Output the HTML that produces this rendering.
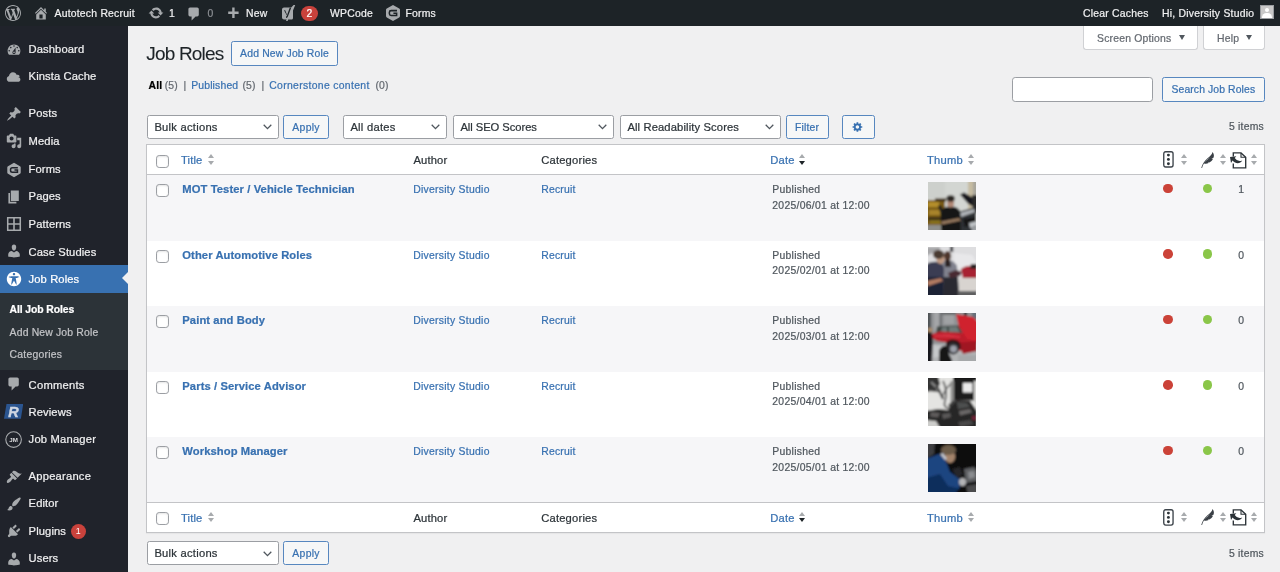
<!DOCTYPE html>
<html lang="en">
<head>
<meta charset="utf-8">
<title>Job Roles</title>
<style>
*{box-sizing:border-box;margin:0;padding:0}
html,body{width:1280px;height:572px;overflow:hidden}
body{background:#f0f0f1;font-family:"Liberation Sans",sans-serif;font-size:10.4px;color:#3c434a;position:relative;-webkit-text-stroke:.22px currentColor}
a{text-decoration:none;color:#3871b1}
#root{position:absolute;left:0;top:0;width:1280px;height:572px;overflow:hidden;will-change:transform}
.abs{position:absolute}
svg{display:block}

/* ---------- admin bar ---------- */
#bar{position:absolute;left:0;top:0;width:1280px;height:26px;background:#1d2327;color:#f0f0f1;font-size:10.4px}
#bar .t{position:absolute;top:0;height:26px;line-height:27.2px;letter-spacing:.22px;white-space:nowrap;color:#f0f0f1}
#bar .ic{position:absolute;fill:#a7aaad}
#bar .badge{position:absolute;left:301px;top:6px;width:17px;height:14.5px;border-radius:8px;background:#c9423c;color:#fff;font-size:10.4px;line-height:15.6px;text-align:center}

/* ---------- side menu ---------- */
#menu{position:absolute;left:0;top:26px;width:128px;height:546px;background:#20232b}
#menu .it{position:absolute;left:0;width:128px;height:27.2px;color:#f0f0f1;font-size:11.2px;line-height:27.2px}
#menu .it span.l{position:absolute;left:28.6px;top:0;white-space:nowrap;letter-spacing:.1px}
#menu .it svg{position:absolute;left:6px;top:5.6px;width:16px;height:16px;fill:#a7aaad}
#menu .cur{background:#3871b1;color:#fff}
#menu .cur svg{fill:#fff}
#menu .cur:after{content:"";position:absolute;right:0;top:7.2px;border:6.4px solid transparent;border-right-color:#f0f0f1;border-left-width:0}
#sub{position:absolute;left:0;width:128px;background:#2c3338}
#sub div{position:absolute;left:9.6px;font-size:10.4px;color:#c3c4c7;white-space:nowrap;line-height:14px}
#sub div.on{color:#fff;font-weight:700}
.pbadge{position:absolute;width:14.6px;height:14.6px;border-radius:8px;background:#c9423c;color:#fff;font-size:8.8px;line-height:15px;text-align:center;-webkit-text-stroke:0}

/* ---------- content ---------- */
h1{position:absolute;left:146.3px;top:41.6px;letter-spacing:-.82px;font-size:19px;-webkit-text-stroke:.08px currentColor;font-weight:400;color:#1d2327;line-height:24px;white-space:nowrap}
.btn{position:absolute;letter-spacing:.17px;border:1px solid #5787bf;border-radius:2.4px;background:#f6f7f7;color:#3871b1;font-size:10.4px;text-align:center;white-space:nowrap}
.sel{position:absolute;letter-spacing:.25px;height:24px;border:1px solid #9b9ea3;border-radius:2.4px;background:#fff;color:#2c3338;font-size:11.2px;line-height:22px;padding-left:6.4px;white-space:nowrap}
.sel svg{position:absolute;right:5.6px;top:8.5px}
.meta{position:absolute;top:26px;height:23.5px;letter-spacing:.2px;padding-top:1.6px;border:1px solid #d0d1d4;border-top:none;border-radius:0 0 3.2px 3.2px;background:#fff;color:#646970;font-size:10.4px;line-height:22px;white-space:nowrap}
.meta i{position:absolute;top:9.1px;width:0;height:0;border:3.3px solid transparent;border-top:5px solid #50575e;border-bottom:none}
.subsub{position:absolute;letter-spacing:.16px;font-size:10.4px;line-height:14px;color:#646970;white-space:nowrap}
.subsub b{color:#000;font-weight:700}
.count{position:absolute;letter-spacing:.2px;font-size:10.4px;color:#50575e;white-space:nowrap;line-height:14px}

/* ---------- table ---------- */
#tbl{position:absolute;left:146px;top:144px;width:1119px;height:389px;background:#fff;border:1px solid #c3c4c7;box-shadow:0 1px 1px rgba(0,0,0,.04)}
.hrow{position:absolute;left:0;width:1117px;height:30px;background:#fff}
.row{position:absolute;left:0;width:1117px;height:65.5px}
.odd{background:#f6f6f8}
.cb{position:absolute;left:8.75px;width:13px;height:13px;border:1px solid #9b9ea3;border-radius:3.2px;background:#fff;box-shadow:inset 0 1px 2px rgba(0,0,0,.1)}
.th{position:absolute;letter-spacing:.15px;font-size:11.2px;line-height:16px;white-space:nowrap;color:#2c3338}
.th.lnk{color:#3871b1}
.td{position:absolute;letter-spacing:.27px;font-size:10.4px;line-height:15.6px;white-space:nowrap;color:#50575e}
.td.lnk{color:#3871b1}
.ttl{position:absolute;left:35.3px;letter-spacing:.1px;font-size:11.2px;font-weight:700;color:#3871b1;white-space:nowrap;line-height:16px}
.srt{position:absolute;width:6.4px;height:11px}
.srt:before,.srt:after{content:"";position:absolute;left:0;width:0;height:0;border-left:3.2px solid transparent;border-right:3.2px solid transparent}
.srt:before{top:0;border-bottom:4.3px solid #a7aaad}
.srt:after{top:6.7px;border-top:4.3px solid #a7aaad}
.srt.d:after{border-top-color:#1d2327}
.dot{position:absolute;width:9.6px;height:9.6px;border-radius:50%}
.red{background:#cb4238}
.grn{background:#8ac649}
.thumb{position:absolute;left:781px;width:48px;height:48px;overflow:hidden}
</style>
</head>
<body>
<div id="root">
<svg width="0" height="0" style="position:absolute">
  <defs>
    <filter id="bl" x="-5%" y="-5%" width="110%" height="110%"><feGaussianBlur stdDeviation="0.9"/></filter>
    <clipPath id="cp"><rect width="48" height="48"/></clipPath>
    <!-- thumb 1 : MOT tester -->
    <g id="t1" clip-path="url(#cp)"><g filter="url(#bl)">
      <rect x="-3" y="-3" width="54" height="54" fill="#d3d6d2"/>
      <rect x="-3" y="-3" width="20" height="20" fill="#cdd0cc"/>
      <rect x="40" y="-2" width="5" height="34" fill="#c6bca2"/>
      <rect x="45" y="-2" width="5" height="16" fill="#a8a69c"/>
      <rect x="-2" y="18" width="19" height="25" fill="#7a5c18"/>
      <rect x="7" y="16.500" width="11" height="3" fill="#3c2c10"/>
      <rect x="0" y="20" width="11" height="5" fill="#b48e2c"/>
      <rect x="1" y="28" width="12" height="5" fill="#a8842a"/>
      <rect x="0" y="35" width="14" height="3.500" fill="#3e3212"/>
      <rect x="2" y="38.500" width="10" height="3" fill="#8a7424"/>
      <rect x="-2" y="43" width="16" height="8" fill="#8e8e8a"/>
      <path d="M32 12.500l4-2 12 7v9l-8-5z" fill="#18181a"/>
      <path d="M44 13h6v18h-5z" fill="#2a2a2c"/>
      <path d="M30 30l18-5v25H32z" fill="#2e3034"/>
      <path d="M31 31l15-4 1 3-14 5z" fill="#b0b4b8"/>
      <path d="M35 37l13-2v7l-11 3z" fill="#121216"/>
      <path d="M41 41l8-2v4l-7 3z" fill="#c0c4c8"/>
      <path d="M43 45l6-1v6h-5z" fill="#9a9ea2"/>
      <path d="M12.500 32c0-5 4-7.500 10-7.500s10 2.500 10 7.500v18H13.500z" fill="#131313"/>
      <path d="M10 24l3 9 3-2-3-8z" fill="#1a1a1a"/>
      <ellipse cx="22.600" cy="21" rx="3.500" ry="4.600" fill="#b08876"/>
      <ellipse cx="22.600" cy="16.500" rx="4.200" ry="3.200" fill="#2c2622"/>
      <path d="M13 39.500l18-3.500 2 2.500-19 4z" fill="#96785e"/>
    </g></g>
    <!-- thumb 2 : two men -->
    <g id="t2" clip-path="url(#cp)"><g filter="url(#bl)">
      <rect x="-3" y="-3" width="54" height="54" fill="#dedee0"/>
      <path d="M-2 0h14v3l-14 6z" fill="#a8a8aa"/>
      <rect x="22" y="-1" width="3.200" height="6" fill="#38383c"/>
      <path d="M26 6l18 2 5 8v6H26z" fill="#e8e8ea"/>
      <path d="M14 17c0-3 3-4 6-4s7 2 9 6l2 31H15z" fill="#80828e"/>
      <path d="M15 30h15l1 20H15z" fill="#2c2c32"/>
      <ellipse cx="19.500" cy="9" rx="3.600" ry="5" fill="#4e342a"/>
      <path d="M17 13h5l1 7h-6z" fill="#2a2020"/>
      <path d="M-2 18c2-3 8-4 12-3s6 4 6 8l-1 27H-2z" fill="#3a3e52"/>
      <path d="M-2 30h17v20H-2z" fill="#1c2036"/>
      <ellipse cx="12.500" cy="12" rx="4" ry="5" fill="#c09a82"/>
      <ellipse cx="10.500" cy="7.500" rx="5.500" ry="4.500" fill="#4a3a30"/>
      <path d="M-1 34l14-3 2 3-15 5z" fill="#b47c62"/>
      <path d="M20 26l8-3 6 2-2 4-10 2z" fill="#4a2a30"/>
      <path d="M33 22c3-3 9-4 16-3v12l-14 1z" fill="#a82030"/>
      <path d="M43 17h6v5h-7z" fill="#2a2024"/>
      <rect x="31" y="31" width="18" height="13" fill="#d8d4d0"/>
      <rect x="30" y="44" width="19" height="6" fill="#5e5e60"/>
    </g></g>
    <!-- thumb 3 : red car -->
    <g id="t3" clip-path="url(#cp)"><g filter="url(#bl)">
      <rect x="-3" y="-3" width="54" height="54" fill="#909294"/>
      <rect x="-3" y="-3" width="6" height="22" fill="#505256"/>
      <rect x="6" y="-2" width="5" height="20" fill="#a4a6a8"/>
      <rect x="12" y="-2" width="1.500" height="18" fill="#5c5e62"/>
      <rect x="16" y="2" width="10" height="9" fill="#a0a2a4"/>
      <rect x="14" y="-2" width="14" height="4" fill="#6c6e70"/>
      <rect x="36" y="-2" width="3" height="5" fill="#2e2e32"/>
      <rect x="44" y="-2" width="6" height="8" fill="#66707a"/>
      <rect x="-3" y="31" width="54" height="20" fill="#b2b4b6"/>
      <path d="M4 32l14 2 4 8-18 3z" fill="#c6c8ca"/>
      <path d="M9 13.500l22-1 4 8H8z" fill="#3c4442"/>
      <path d="M21 14l8-.5 3 6h-11z" fill="#6e7a78"/>
      <path d="M14 14.500l5-.3v5.300h-6z" fill="#707c7a"/>
      <path d="M4 21l8-2.500 26 1.500 11 3v12l-8 4-12-2-6-7-14-2-5-3z" fill="#bc1c2a"/>
      <path d="M6 22l14-1 12 2v2l-26-1z" fill="#d43040"/>
      <path d="M28 1l17 3 5 5v20l-11-3-8-12z" fill="#d0202e"/>
      <path d="M30 30l19-2v10l-14 3z" fill="#a01624"/>
      <path d="M18 30c2-4 10-5 14 0l1 6H18z" fill="#2a1418"/>
      <circle cx="25" cy="35.500" r="6" fill="#303036"/>
      <circle cx="25.500" cy="36" r="3.400" fill="#9ca0aa"/>
      <path d="M-2 18h5.500l1.500 10-1 22H-2z" fill="#18181c"/>
      <ellipse cx="2" cy="17" rx="2.500" ry="2.500" fill="#a88868"/>
      <path d="M11 38c1-4 5-6 8-5l2 8 3 6v3H11z" fill="#161618"/>
      <rect x="30" y="42" width="20" height="8" fill="#a6a8aa"/>
    </g></g>
    <!-- thumb 4 : engine bw -->
    <g id="t4" clip-path="url(#cp)"><g filter="url(#bl)">
      <rect x="-3" y="-3" width="54" height="54" fill="#e4e4e2"/>
      <path d="M-2-2h12l2 8-4 6-10 2z" fill="#303030"/>
      <path d="M0 12l13 1.500" stroke="#4a4a4a" stroke-width="2" fill="none"/>
      <path d="M3 4l5 5" stroke="#8a8a8a" stroke-width="2" fill="none"/>
      <path d="M15 3c3 6 4 14 2 20s2 8 6 7" stroke="#5a5a5a" stroke-width="1.800" fill="none"/>
      <path d="M24 5c-4 3-8 8-10 15" stroke="#6a6a6a" stroke-width="1.600" fill="none"/>
      <path d="M9 8l6 13" stroke="#444" stroke-width="2.200" fill="none"/>
      <rect x="22.500" y="3" width="3.500" height="26" fill="#8e8e8c"/>
      <rect x="25" y="-2" width="24" height="5" fill="#141414"/>
      <rect x="26" y="1" width="20" height="21.500" fill="#1a1a1a"/>
      <rect x="35" y="5" width="9.500" height="9.500" fill="#eaeaea"/>
      <rect x="46" y="3" width="3" height="22" fill="#d8d8d6"/>
      <path d="M-2 33l12-2 10 1 8-10 14 1 7 10v18H8l-10-6z" fill="#282626"/>
      <path d="M29 24l10 1 3 4-12 2z" fill="#4e5050"/>
      <path d="M31 33l11-2 2 3.500-12 3z" fill="#6a6868"/>
      <path d="M14 36l8-1 1 4-8 2z" fill="#5a5858"/>
      <path d="M3 34l9 1-2 4.500-8-1z" fill="#5e5c5c"/>
      <rect x="44" y="38" width="5" height="4" fill="#702234"/>
      <path d="M-2 42l10 1 4 7H-2z" fill="#cdcdcb"/>
      <path d="M30 44l12-2 4 4-14 3z" fill="#4a4848"/>
      <path d="M20 27l6-5 2 2-6 6z" fill="#3a3a3a"/>
    </g></g>
    <!-- thumb 5 : mechanic in blue -->
    <g id="t5" clip-path="url(#cp)"><g filter="url(#bl)">
      <rect x="-3" y="-3" width="54" height="54" fill="#0b0b0d"/>
      <path d="M-2-2h9l-1 12-8 5z" fill="#3c3e40"/>
      <ellipse cx="22" cy="12.500" rx="5.200" ry="6.500" fill="#a4846c"/>
      <ellipse cx="20.500" cy="6" rx="7.500" ry="5" fill="#6c5c4a"/>
      <path d="M-2 15l13-5 6 5 5 13 11 8-2 9-12 4H-2z" fill="#1d4580"/>
      <path d="M-2 34l14-4 8 12 10 2-2 6H-2z" fill="#0f2e5c"/>
      <path d="M12 10l3-1 4 6-2 1z" fill="#c8ccd4"/>
      <path d="M36 25l10-2 3 4v10l-11 2z" fill="#5e6064"/>
      <path d="M40 28l6-1 1 6-6 2z" fill="#8a8c90"/>
      <ellipse cx="34.500" cy="38" rx="3.500" ry="4" fill="#b4b4b6"/>
      <path d="M38 42l11-2v10H40z" fill="#4c4c4e"/>
      <path d="M24 25l8-2 3 8-6 3z" fill="#26282c"/>
    </g></g>
  </defs>
</svg>

<!-- ======= ADMIN BAR ======= -->
<div id="bar">
  <svg class="ic" style="left:4.5px;top:5px" width="16" height="16" viewBox="0 0 20 20"><path d="M20 10c0-5.51-4.49-10-10-10C4.48 0 0 4.49 0 10c0 5.52 4.48 10 10 10 5.51 0 10-4.48 10-10zM7.78 15.37L4.37 6.22c.55-.02 1.17-.08 1.17-.08.5-.06.44-1.13-.06-1.11 0 0-1.45.11-2.37.11-.18 0-.37 0-.58-.01C4.12 2.69 6.87 1.11 10 1.11c2.33 0 4.45.87 6.05 2.34-.68-.11-1.65.39-1.65 1.58 0 .74.45 1.36.9 2.1.35.61.55 1.36.55 2.46 0 1.49-1.4 5-1.4 5l-3.03-8.37c.54-.02.82-.17.82-.17.5-.05.44-1.25-.06-1.22 0 0-1.44.12-2.38.12-.87 0-2.33-.12-2.33-.12-.5-.03-.56 1.2-.06 1.22l.92.08 1.26 3.41zM17.41 10c.24-.64.74-1.87.43-4.25.7 1.29 1.05 2.71 1.05 4.25 0 3.29-1.73 6.24-4.4 7.78.97-2.59 1.94-5.2 2.92-7.78zM6.1 18.09C3.12 16.65 1.11 13.53 1.11 10c0-1.3.23-2.48.72-3.59C3.25 10.3 4.67 14.2 6.1 18.09zm4.03-6.63l2.58 6.98c-.86.29-1.76.45-2.71.45-.79 0-1.57-.11-2.29-.33.81-2.38 1.62-4.74 2.42-7.1z"/></svg>
  <svg class="ic" style="left:32.7px;top:4.8px" width="16" height="16" viewBox="0 0 20 20"><path d="M16 8.5l1.53 1.53-1.06 1.06L10 4.62l-6.47 6.47-1.06-1.06L10 2.5l4 4v-2h2v4zm-6-2.46l6 5.99V18H4v-5.97zM12 17v-5H8v5h4z"/></svg>
  <div class="t" style="left:54.5px">Autotech Recruit</div>
  <svg class="ic" style="left:148px;top:5px" width="16" height="16" viewBox="0 0 20 20"><path d="M10.2 3.28c3.53 0 6.43 2.61 6.92 6h2.08l-3.5 4-3.5-4h2.32c-.45-1.97-2.21-3.45-4.32-3.45-1.45 0-2.73.71-3.54 1.78L4.95 5.66C6.23 4.2 8.11 3.28 10.2 3.28zm-.4 13.44c-3.52 0-6.43-2.61-6.92-6H.8l3.5-4c1.17 1.33 2.33 2.67 3.5 4H5.48c.45 1.97 2.21 3.45 4.32 3.45 1.45 0 2.73-.71 3.54-1.78l1.71 1.95c-1.28 1.46-3.15 2.38-5.25 2.38z"/></svg>
  <div class="t" style="left:169px">1</div>
  <svg class="ic" style="left:186px;top:6px" width="16" height="16" viewBox="0 0 20 20"><path d="M5 2h9c1.1 0 2 .9 2 2v7c0 1.1-.9 2-2 2h-2l-5 5v-5H5c-1.1 0-2-.9-2-2V4c0-1.1.9-2 2-2z"/></svg>
  <div class="t" style="left:207.5px;color:#8c8f94">0</div>
  <svg class="ic" style="left:225px;top:6px" width="16" height="16" viewBox="0 0 20 20"><path d="M17 7v3h-5v5H9v-5H4V7h5V2h3v5h5z"/></svg>
  <div class="t" style="left:246px">New</div>
  <!-- yoast -->
  <svg class="ic" style="left:281px;top:4.5px" width="15" height="16" viewBox="0 0 15 16"><path d="M3 2.5h7.2L12.6 0h1.6L12 5.5V13c0 .8-.5 1.5-1.5 1.5H7.2L6.6 16H5l.6-1.5H3c-1 0-2-.7-2-2v-8c0-1.300 1-2 2-2z"/><path d="M4.2 5.200l1.900 4.800 2.600-7.200h1.500L7 11.300c-.4 1-.9 1.600-2 1.600v-1.300c.6 0 .8-.3 1-.8L3 5.200z" fill="#1d2327"/></svg>
  <div class="badge">2</div>
  <div class="t" style="left:330px">WPCode</div>
  <!-- gravity forms -->
  <svg class="ic" style="left:385.5px;top:5px" width="14" height="16" viewBox="0 0 14 16"><path d="M7 0l6.200 3.600c.5.300.8.800.8 1.400v6c0 .600-.3 1.100-.8 1.400L7 16 .8 12.400C.3 12.100 0 11.600 0 11V5c0-.6.3-1.100.8-1.400z"/><path d="M11 5.600H5.100c-1 0-1.700.700-1.700 1.700v1.400c0 1 .7 1.700 1.700 1.700h5.500V8.200H7.400" fill="none" stroke="#1d2327" stroke-width="1.550"/></svg>
  <div class="t" style="left:405.5px">Forms</div>

  <div class="t" style="left:1083px">Clear Caches</div>
  <div class="t" style="left:1162px">Hi, Diversity Studio</div>
  <div class="abs" style="left:1260.3px;top:5.3px;width:14px;height:14px;background:#c8c8c8;border:1px solid #9a9da1;overflow:hidden">
    <div class="abs" style="left:3.5px;top:1.5px;width:4.5px;height:4.5px;border-radius:50%;background:#fff"></div>
    <div class="abs" style="left:1px;top:6.5px;width:9.5px;height:8px;border-radius:4.5px 4.5px 0 0;background:#fff"></div>
  </div>
</div>

<!-- ======= SIDE MENU ======= -->
<div id="menu">
  <div class="it" style="top:10.1px"><svg viewBox="0 0 20 20"><path d="M3.76 16h12.48c1.1-1.37 1.76-3.11 1.76-5 0-4.42-3.58-8-8-8s-8 3.58-8 8c0 1.89.66 3.63 1.76 5zM10 4c.55 0 1 .45 1 1s-.45 1-1 1-1-.45-1-1 .45-1 1-1zM6 6c.55 0 1 .45 1 1s-.45 1-1 1-1-.45-1-1 .45-1 1-1zm8 0c.55 0 1 .45 1 1s-.45 1-1 1-1-.45-1-1 .45-1 1-1zm-5.37 5.55L12 7v6c0 1.1-.9 2-2 2s-2-.9-2-2c0-.57.24-1.08.63-1.45zM4 10c.55 0 1 .45 1 1s-.45 1-1 1-1-.45-1-1 .45-1 1-1zm12 0c.55 0 1 .45 1 1s-.45 1-1 1-1-.45-1-1 .45-1 1-1zm-5 3c0-.55-.45-1-1-1s-1 .45-1 1 .45 1 1 1 1-.45 1-1z"/></svg><span class="l">Dashboard</span></div>
  <div class="it" style="top:37.3px"><svg viewBox="0 0 20 20"><path d="M14.9 9c1.8 0 3.1 1.400 3.1 3.100S16.600 15 14.900 15H4.600C2.600 15 1 13.400 1 11.400c0-1.700 1.200-3.100 2.700-3.500C3.800 5.200 6 3 8.700 3c2.300 0 4.200 1.500 4.800 3.600.4-.2.900-.4 1.400-.4 1.100 0 2 .9 2 2 0 .3-.1.600-.2.800z" transform="translate(0 1)"/></svg><span class="l">Kinsta Cache</span></div>

  <div class="it" style="top:74.0px"><svg viewBox="0 0 20 20"><path d="M10.44 3.02l1.82-1.82 6.36 6.35-1.83 1.82c-1.05-.68-2.48-.57-3.41.36l-.75.75c-.92.93-1.04 2.35-.35 3.41l-1.83 1.82-2.41-2.41-2.8 2.79c-.42.42-3.38 2.71-3.8 2.29s1.86-3.39 2.28-3.81l2.79-2.79L4.1 9.36l1.830-1.820c1.050.690 2.480.570 3.400-.360l.750-.750c.930-.920 1.050-2.350.360-3.410z"/></svg><span class="l">Posts</span></div>
  <div class="it" style="top:101.9px"><svg viewBox="0 0 20 20"><path d="M13 11V4c0-.55-.45-1-1-1h-1.670L9 1H5L3.670 3H2c-.55 0-1 .45-1 1v7c0 .55.45 1 1 1h10c.55 0 1-.45 1-1zM7 4.500c1.380 0 2.500 1.120 2.500 2.500S8.380 9.500 7 9.500 4.500 8.380 4.500 7 5.620 4.500 7 4.500zM14 6h5v10.500c0 1.380-1.120 2.500-2.500 2.500S14 17.880 14 16.500s1.120-2.500 2.500-2.500c.170 0 .340.020.5.050V9h-3V6zm-4 8.050V13h2v3.500c0 1.380-1.120 2.500-2.500 2.500S7 17.880 7 16.500 8.120 14 9.500 14c.170 0 .340.020.5.050z"/></svg><span class="l">Media</span></div>
  <div class="it" style="top:129.6px"><svg viewBox="0 0 20 20" style="top:6.2px"><path d="M10 1l7.500 4.300c.6.300.9.900.9 1.500v6.400c0 .600-.3 1.200-.9 1.500L10 19l-7.500-4.300c-.6-.300-.9-.900-.9-1.500V6.800c0-.600.3-1.200.9-1.500z"/><path d="M14.800 7.200H7.900c-1.300 0-2.200.900-2.200 2.200v1.200c0 1.300.9 2.200 2.200 2.200h6.400v-2.700h-3.700" fill="none" stroke="#20232b" stroke-width="1.900"/></svg><span class="l">Forms</span></div>
  <div class="it" style="top:157.1px"><svg viewBox="0 0 20 20"><path d="M6 15V2h10v13H6zm-1 1h8v2H3V5h2v11z"/></svg><span class="l">Pages</span></div>
  <div class="it" style="top:184.9px"><svg viewBox="0 0 20 20"><path d="M1.200 1.200h17.600v17.600H1.200zM3.100 3.100v5.900h5.900V3.100zm7.900 0v5.900h5.900V3.100zM3.100 11v5.900h5.900V11zm7.900 0v5.900h5.900V11z" fill-rule="evenodd"/></svg><span class="l">Patterns</span></div>
  <div class="it" style="top:212.5px"><svg viewBox="0 0 20 20" style="top:4.9px"><path d="M10 9.250c-2.270 0-2.730-3.440-2.730-3.440C7 4.020 7.820 2 9.970 2c2.160 0 2.980 2.020 2.710 3.810 0 0-.41 3.440-2.680 3.440zm0 2.570L12.720 10c2.390 0 4.520 2.330 4.520 4.530v2.490s-3.650 1.130-7.240 1.130c-3.650 0-7.240-1.130-7.240-1.130v-2.490c0-2.250 1.940-4.480 4.470-4.480z"/></svg><span class="l">Case Studies</span></div>
  <div class="it cur" style="top:239.3px;height:27.6px"><svg viewBox="0 0 20 20"><path d="M19 10c0-4.970-4.030-9-9-9s-9 4.030-9 9 4.030 9 9 9 9-4.030 9-9zm-9-7.400c.83 0 1.500.67 1.500 1.500s-.67 1.510-1.500 1.510c-.82 0-1.500-.68-1.500-1.510s.68-1.500 1.500-1.500zM3.400 7.360c0-.65 6.600-.76 6.600-.76s6.600.11 6.600.76-4.470 1.400-4.470 1.400 1.690 8.140 1.060 8.380c-.62.240-3.190-5.190-3.190-5.190s-2.560 5.430-3.180 5.190c-.63-.24 1.060-8.380 1.060-8.380S3.400 8.010 3.400 7.360z"/></svg><span class="l" style="top:.8px">Job Roles</span></div>

  <div id="sub" style="top:266.9px;height:77.6px">
    <div class="on" style="top:9.8px;letter-spacing:-.1px">All Job Roles</div>
    <div style="top:32.8px;letter-spacing:.17px">Add New Job Role</div>
    <div style="top:55.3px;letter-spacing:.23px">Categories</div>
  </div>

  <div class="it" style="top:345.5px"><svg viewBox="0 0 20 20" style="top:4.7px"><path d="M5 2h9c1.1 0 2 .9 2 2v7c0 1.1-.9 2-2 2h-2l-5 5v-5H5c-1.1 0-2-.9-2-2V4c0-1.1.9-2 2-2z"/></svg><span class="l" style="letter-spacing:.25px">Comments</span></div>
  <div class="it" style="top:372.5px">
    <svg style="left:4.2px;top:5.3px;width:19.2px;height:14.8px" viewBox="0 0 19.2 14.8"><path d="M2.500 0H19.200L16.900 14.800H0z" fill="#2b5590"/><text x="4.300" y="12.600" font-family="Liberation Sans" font-size="14.500" font-weight="700" font-style="italic" fill="#cfd6e2" stroke="#cfd6e2" stroke-width=".4">R</text></svg>
    <span class="l">Reviews</span></div>
  <div class="it" style="top:399.7px">
    <svg style="left:5px;top:5.1px;width:17.200px;height:17.200px" viewBox="0 0 17.2 17.2"><circle cx="8.6" cy="8.6" r="7.800" fill="none" stroke="#a7aaad" stroke-width="1.100"/><text x="8.600" y="10.800" text-anchor="middle" font-family="Liberation Sans" font-size="6.200" font-weight="700" fill="#dcdcde" stroke="none">JM</text></svg>
    <span class="l" style="letter-spacing:.2px">Job Manager</span></div>

  <div class="it" style="top:437px"><svg viewBox="0 0 20 20"><path d="M14.480 11.060L7.410 3.990l1.500-1.500c.5-.56 2.300-.47 3.510.32 1.210.8 1.430 1.280 2.910 2.100 1.180.64 2.450 1.260 4.450.85zm-.71.71L6.700 4.700 4.930 6.470c-.39.39-.39 1.020 0 1.410l1.060 1.060c.39.39.39 1.030 0 1.420-.6.600-1.430 1.110-2.210 1.690-.35.260-.7.530-1.010.84C1.430 14.230.4 16.080 1.400 17.070c.99 1 2.840-.03 4.180-1.360.31-.31.580-.66.850-1.020.57-.78 1.080-1.610 1.690-2.210.39-.39 1.020-.39 1.410 0l1.060 1.060c.39.39 1.020.39 1.410 0z"/></svg><span class="l" style="letter-spacing:.22px">Appearance</span></div>
  <div class="it" style="top:464.3px"><svg viewBox="0 0 20 20"><path d="M18.330 3.570s.27-.8-.31-1.360c-.53-.52-1.220-.24-1.220-.24-.61.3-5.760 3.470-7.670 5.570-.86.960-2.060 3.790-1.090 4.820.92.980 3.960-.17 4.790-1 2.060-2.060 5.210-7.170 5.500-7.790zM1.400 17.650c2.370-1.560 1.460-3.410 3.230-4.640.93-.65 2.220-.62 3.080.29.63.67.8 2.570-.16 3.460-1.570 1.450-4 1.550-6.150.89z"/></svg><span class="l">Editor</span></div>
  <div class="it" style="top:491.5px"><svg viewBox="0 0 20 20"><path d="M13.110 4.360L9.870 7.600 8 5.730l3.240-3.240c.35-.34 1.050-.2 1.560.32.520.51.660 1.210.31 1.550zm-8 1.770l.91-1.120 9.010 9.010-1.190.84c-.71.710-2.630 1.160-3.820 1.160H6.140L4.900 17.260c-.59.590-1.540.59-2.120 0-.59-.58-.59-1.530 0-2.120l1.240-1.240v-3.880c0-1.130.4-3.190 1.090-3.890zm7.260 3.970l3.240-3.240c.34-.35 1.040-.21 1.550.31.520.51.660 1.210.31 1.550l-3.240 3.250z"/></svg><span class="l">Plugins</span><div class="pbadge" style="left:71px;top:6.800px">1</div></div>
  <div class="it" style="top:519.3px"><svg viewBox="0 0 20 20"><path d="M10 9.250c-2.270 0-2.730-3.440-2.730-3.440C7 4.020 7.820 2 9.970 2c2.160 0 2.980 2.020 2.710 3.810 0 0-.41 3.440-2.680 3.440zm0 2.570L12.720 10c2.390 0 4.520 2.330 4.520 4.530v2.490s-3.650 1.130-7.240 1.130c-3.650 0-7.240-1.130-7.240-1.130v-2.490c0-2.250 1.940-4.480 4.470-4.480z"/></svg><span class="l">Users</span></div>
</div>

<!-- ======= CONTENT HEADER ======= -->
<div class="meta" style="left:1083px;width:114.500px;padding-left:13px">Screen Options<i style="left:95px"></i></div>
<div class="meta" style="left:1203px;width:61.500px;padding-left:13px">Help<i style="left:42px"></i></div>

<h1>Job Roles</h1>
<div class="btn" style="left:231px;top:41px;width:107px;height:24.500px;line-height:24.1px">Add New Job Role</div>

<div class="subsub" style="left:0;top:78.9px;width:400px;height:14px">
  <b class="abs" style="left:148.5px">All</b>
  <span class="abs" id="ss1" style="left:164.7px">(5)</span>
  <span class="abs" style="left:183.4px">|</span>
  <a class="abs" id="ss2" style="left:191.2px">Published</a>
  <span class="abs" id="ss3" style="left:242.4px">(5)</span>
  <span class="abs" style="left:261.6px">|</span>
  <a class="abs" id="ss4" style="left:269.2px;letter-spacing:.33px">Cornerstone content</a>
  <span class="abs" id="ss5" style="left:375.4px">(0)</span>
</div>

<div class="abs" style="left:1012px;top:77.25px;width:140.500px;height:24.500px;border:1px solid #9b9ea3;border-radius:3.200px;background:#fff"></div>
<div class="btn" style="left:1162px;top:77.25px;width:102.700px;height:24.500px;line-height:24.6px;letter-spacing:.11px">Search Job Roles</div>

<!-- ======= TABLENAV TOP ======= -->
<div class="sel" style="left:147px;top:114.5px;width:131.500px">Bulk actions<svg width="9" height="6" viewBox="0 0 9 6"><path d="M.7.800l3.800 3.800L8.300.8" fill="none" stroke="#50575e" stroke-width="1.300"/></svg></div>
<div class="btn" style="left:283.200px;top:114.5px;width:45.800px;height:24px;line-height:23.2px;letter-spacing:.3px">Apply</div>
<div class="sel" style="left:343px;top:114.5px;width:103.500px">All dates<svg width="9" height="6" viewBox="0 0 9 6"><path d="M.7.800l3.800 3.800L8.300.8" fill="none" stroke="#50575e" stroke-width="1.300"/></svg></div>
<div class="sel" style="left:453px;top:114.5px;width:160.500px;letter-spacing:-.04px">All SEO Scores<svg width="9" height="6" viewBox="0 0 9 6"><path d="M.7.800l3.800 3.800L8.300.8" fill="none" stroke="#50575e" stroke-width="1.300"/></svg></div>
<div class="sel" style="left:620px;top:114.5px;width:160.800px;letter-spacing:.13px">All Readability Scores<svg width="9" height="6" viewBox="0 0 9 6"><path d="M.7.800l3.800 3.800L8.300.8" fill="none" stroke="#50575e" stroke-width="1.300"/></svg></div>
<div class="btn" style="left:785.500px;top:114.5px;width:43px;height:24px;line-height:23.2px">Filter</div>
<div class="btn" style="left:842px;top:114.5px;width:32.500px;height:24px"><svg style="position:absolute;left:9.100px;top:5.500px" width="11.4" height="11.4" viewBox="0 0 20 20"><path fill="#3871b1" d="M18 12h-2.180c-.17.7-.44 1.350-.81 1.930l1.540 1.540-2.100 2.100-1.540-1.540c-.58.360-1.230.630-1.910.790V19H8v-2.180c-.68-.16-1.330-.43-1.910-.79l-1.540 1.540-2.120-2.120 1.540-1.540c-.36-.58-.63-1.230-.79-1.910H1V9.030h2.170c.16-.7.44-1.350.8-1.940L2.430 5.550l2.100-2.100 1.540 1.540c.58-.37 1.240-.64 1.930-.81V2h3v2.180c.68.160 1.330.430 1.910.790l1.540-1.540 2.120 2.120-1.540 1.540c.36.590.64 1.240.8 1.940H18V12zm-8.500 1.500c1.660 0 3-1.340 3-3s-1.340-3-3-3-3 1.340-3 3 1.340 3 3 3z"/></svg></div>
<div class="count" style="left:1229px;top:120px">5 items</div>

<!-- ======= TABLE ======= -->
<div id="tbl">
  <div class="hrow" style="top:0;border-bottom:1px solid #c3c4c7">
    <div class="cb" style="top:9.7px"></div>
    <div class="th lnk" style="left:34px;top:7px">Title</div><div class="srt" style="left:61px;top:9.3px"></div>
    <div class="th" style="left:266.500px;top:7px">Author</div>
    <div class="th" style="left:394.200px;letter-spacing:.2px;top:7px">Categories</div>
    <div class="th lnk" style="left:623.3px;top:7px">Date</div><div class="srt d" style="left:652.3px;top:9.3px"></div>
    <div class="th lnk" style="left:780px;letter-spacing:.2px;top:7px">Thumb</div><div class="srt" style="left:821.2px;top:9.3px"></div>
    <svg class="abs" style="left:1015.5px;top:6.3px" width="11" height="17" viewBox="0 0 11 17"><rect x=".75" y=".75" width="9.3" height="15.3" rx="2" fill="none" stroke="#3c434a" stroke-width="1.35"/><circle cx="5.4" cy="4.1" r="1.45" fill="#2c3338"/><circle cx="5.4" cy="8.4" r="1.45" fill="#2c3338"/><circle cx="5.4" cy="12.7" r="1.45" fill="#2c3338"/></svg><div class="srt" style="left:1034px;top:9.3px"></div>
    <svg class="abs" style="left:1054.2px;top:6.7px" width="14" height="16" viewBox="0 0 14 16"><path fill="#3a4046" d="M.2 15.900C1.500 11.900 3.600 8.800 6.500 6.300 8.700 4.400 10.900 3 11.600 0c1.700 2.300 1.600 4.600.7 6.100l-1.900.6 1.500.4c-.6 1.600-1.900 2.700-3.600 3.300l-1.500-.2.800.9c-1.500.800-3.100.800-4.500.500-.8 1-1.500 2.500-1.900 4.200zM3.400 10.700c2-2.500 4.200-4.300 6.800-6-2.900 1.400-5.200 3.400-6.800 6z" fill-rule="evenodd"/></svg><div class="srt" style="left:1073.2px;top:9.3px"></div>
    <svg class="abs" style="left:1082.7px;top:6.5px" width="17" height="17" viewBox="0 0 17 17"><path d="M3.300 4.500V.900h7.700l4.700 4.300v10.700H3.300v-4.300" fill="none" stroke="#2c3338" stroke-width="1.350"/><path d="M11 .900v4.300h4.700" fill="none" stroke="#2c3338" stroke-width="1.100"/><path fill="#2c3338" d="M0 4.900l6.300-.700-1.500 1.900c1.400 2.200 3.900 3.600 7.400 2.300-1.800 3.500-6.600 3.900-9.600.100L1 10.900z"/></svg><div class="srt" style="left:1104.1px;top:9.3px"></div>
  </div>
  <div class="row odd" style="top:30.0px">
    <div class="cb" style="top:9.2px"></div>
    <div class="ttl" style="top:6.3px">MOT Tester / Vehicle Technician</div>
    <div class="td lnk" style="left:266.2px;top:7.3px">Diversity Studio</div>
    <div class="td lnk" style="left:394.3px;top:7.3px;letter-spacing:.2px">Recruit</div>
    <div class="td" style="left:625.3px;top:7.3px">Published<br>2025/06/01 at 12:00</div>
    <div class="thumb" style="top:6.8px"><svg width="48" height="48" viewBox="0 0 48 48"><use href="#t1"/></svg></div>
    <div class="dot red" style="left:1016.1px;top:8.8px"></div>
    <div class="dot grn" style="left:1055.5px;top:8.8px"></div>
    <div class="td" style="left:1090.3px;top:7.3px;width:8px;text-align:center">1</div>
  </div>
  <div class="row" style="top:95.5px">
    <div class="cb" style="top:9.2px"></div>
    <div class="ttl" style="top:6.3px">Other Automotive Roles</div>
    <div class="td lnk" style="left:266.2px;top:7.3px">Diversity Studio</div>
    <div class="td lnk" style="left:394.3px;top:7.3px;letter-spacing:.2px">Recruit</div>
    <div class="td" style="left:625.3px;top:7.3px">Published<br>2025/02/01 at 12:00</div>
    <div class="thumb" style="top:6.8px"><svg width="48" height="48" viewBox="0 0 48 48"><use href="#t2"/></svg></div>
    <div class="dot red" style="left:1016.1px;top:8.8px"></div>
    <div class="dot grn" style="left:1055.5px;top:8.8px"></div>
    <div class="td" style="left:1090.3px;top:7.3px;width:8px;text-align:center">0</div>
  </div>
  <div class="row odd" style="top:161.0px">
    <div class="cb" style="top:9.2px"></div>
    <div class="ttl" style="top:6.3px">Paint and Body</div>
    <div class="td lnk" style="left:266.2px;top:7.3px">Diversity Studio</div>
    <div class="td lnk" style="left:394.3px;top:7.3px;letter-spacing:.2px">Recruit</div>
    <div class="td" style="left:625.3px;top:7.3px">Published<br>2025/03/01 at 12:00</div>
    <div class="thumb" style="top:6.8px"><svg width="48" height="48" viewBox="0 0 48 48"><use href="#t3"/></svg></div>
    <div class="dot red" style="left:1016.1px;top:8.8px"></div>
    <div class="dot grn" style="left:1055.5px;top:8.8px"></div>
    <div class="td" style="left:1090.3px;top:7.3px;width:8px;text-align:center">0</div>
  </div>
  <div class="row" style="top:226.5px">
    <div class="cb" style="top:9.2px"></div>
    <div class="ttl" style="top:6.3px">Parts / Service Advisor</div>
    <div class="td lnk" style="left:266.2px;top:7.3px">Diversity Studio</div>
    <div class="td lnk" style="left:394.3px;top:7.3px;letter-spacing:.2px">Recruit</div>
    <div class="td" style="left:625.3px;top:7.3px">Published<br>2025/04/01 at 12:00</div>
    <div class="thumb" style="top:6.8px"><svg width="48" height="48" viewBox="0 0 48 48"><use href="#t4"/></svg></div>
    <div class="dot red" style="left:1016.1px;top:8.8px"></div>
    <div class="dot grn" style="left:1055.5px;top:8.8px"></div>
    <div class="td" style="left:1090.3px;top:7.3px;width:8px;text-align:center">0</div>
  </div>
  <div class="row odd" style="top:292.0px">
    <div class="cb" style="top:9.2px"></div>
    <div class="ttl" style="top:6.3px">Workshop Manager</div>
    <div class="td lnk" style="left:266.2px;top:7.3px">Diversity Studio</div>
    <div class="td lnk" style="left:394.3px;top:7.3px;letter-spacing:.2px">Recruit</div>
    <div class="td" style="left:625.3px;top:7.3px">Published<br>2025/05/01 at 12:00</div>
    <div class="thumb" style="top:6.8px"><svg width="48" height="48" viewBox="0 0 48 48"><use href="#t5"/></svg></div>
    <div class="dot red" style="left:1016.1px;top:8.8px"></div>
    <div class="dot grn" style="left:1055.5px;top:8.8px"></div>
    <div class="td" style="left:1090.3px;top:7.3px;width:8px;text-align:center">0</div>
  </div>
  <div class="hrow" style="top:357px;height:30px;border-top:1px solid #c3c4c7">
    <div class="cb" style="top:9.2px"></div>
    <div class="th lnk" style="left:34px;top:6.5px">Title</div><div class="srt" style="left:61px;top:8.8px"></div>
    <div class="th" style="left:266.500px;top:6.5px">Author</div>
    <div class="th" style="left:394.200px;letter-spacing:.2px;top:6.5px">Categories</div>
    <div class="th lnk" style="left:623.3px;top:6.5px">Date</div><div class="srt d" style="left:652.3px;top:8.8px"></div>
    <div class="th lnk" style="left:780px;letter-spacing:.2px;top:6.5px">Thumb</div><div class="srt" style="left:821.2px;top:8.8px"></div>
    <svg class="abs" style="left:1015.5px;top:5.9px" width="11" height="17" viewBox="0 0 11 17"><rect x=".75" y=".75" width="9.3" height="15.3" rx="2" fill="none" stroke="#3c434a" stroke-width="1.35"/><circle cx="5.4" cy="4.1" r="1.45" fill="#2c3338"/><circle cx="5.4" cy="8.4" r="1.45" fill="#2c3338"/><circle cx="5.4" cy="12.7" r="1.45" fill="#2c3338"/></svg><div class="srt" style="left:1034px;top:8.8px"></div>
    <svg class="abs" style="left:1054.2px;top:6.3px" width="14" height="16" viewBox="0 0 14 16"><path fill="#3a4046" d="M.2 15.900C1.500 11.900 3.600 8.800 6.500 6.300 8.700 4.400 10.900 3 11.600 0c1.700 2.300 1.600 4.600.7 6.100l-1.900.6 1.500.4c-.6 1.600-1.900 2.700-3.600 3.300l-1.500-.2.800.9c-1.500.800-3.100.800-4.500.500-.8 1-1.500 2.500-1.900 4.200zM3.400 10.700c2-2.500 4.200-4.300 6.800-6-2.900 1.400-5.200 3.400-6.800 6z" fill-rule="evenodd"/></svg><div class="srt" style="left:1073.2px;top:8.8px"></div>
    <svg class="abs" style="left:1082.7px;top:6.1px" width="17" height="17" viewBox="0 0 17 17"><path d="M3.300 4.500V.900h7.700l4.700 4.300v10.700H3.300v-4.300" fill="none" stroke="#2c3338" stroke-width="1.350"/><path d="M11 .900v4.300h4.700" fill="none" stroke="#2c3338" stroke-width="1.100"/><path fill="#2c3338" d="M0 4.900l6.300-.700-1.500 1.900c1.400 2.200 3.900 3.600 7.400 2.300-1.800 3.500-6.600 3.900-9.600.100L1 10.900z"/></svg><div class="srt" style="left:1104.1px;top:8.8px"></div>
  </div>
</div>

<!-- ======= TABLENAV BOTTOM ======= -->
<div class="sel" style="left:147px;top:541px;width:131.500px">Bulk actions<svg width="9" height="6" viewBox="0 0 9 6"><path d="M.7.800l3.800 3.800L8.300.8" fill="none" stroke="#50575e" stroke-width="1.300"/></svg></div>
<div class="btn" style="left:283.200px;top:541px;width:45.800px;height:24px;line-height:23.2px;letter-spacing:.3px">Apply</div>
<div class="count" style="left:1229px;top:546.500px">5 items</div>

</div>
</body>
</html>
